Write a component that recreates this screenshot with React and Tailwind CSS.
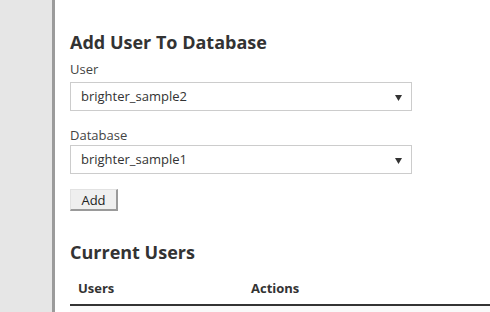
import React from 'react';

const FONT = { fontFamily: '"Open Sans", "Liberation Sans", sans-serif' };

function Select({ value }) {
    return (
        <div className="relative w-[342px] h-[29px] border border-[#cccccc] bg-white flex items-center pl-[10px] text-[13px] text-[#333]">
            <span>{value}</span>
            <svg className="absolute right-[9px] top-[12px]" width="7" height="6" viewBox="0 0 7 6">
                <path d="M0 0 H7 L3.5 6 Z" fill="#333" />
            </svg>
        </div>
    );
}

export default function App() {
    return (
        <div className="flex h-[312px] w-[490px] overflow-hidden bg-white" style={FONT}>
            <div className="w-[55px] shrink-0 bg-[#e6e6e6] border-r-[3px] border-[#9b9b9b]" />
            <div className="pl-[15px] pt-[30px] flex-1 text-[#333]">
                <h1 className="text-[18px] leading-[24px] font-bold text-[#333]">Add User To Database</h1>

                <div className="mt-[6px] text-[13px] leading-[18px] text-[#444]">User</div>
                <div className="mt-[4px]">
                    <Select value="brighter_sample2" />
                </div>

                <div className="mt-[15px] text-[13px] leading-[18px] text-[#444]">Database</div>
                <div className="mt-[1px]">
                    <Select value="brighter_sample1" />
                </div>

                <button className="mt-[15px] w-[48px] h-[22px] bg-[#efefef] border border-[#e2e2e2] border-r-[#9a9a9a] border-b-[#9a9a9a] border-r-2 border-b-2 text-[13px] leading-[18px] text-[#222]">
                    Add
                </button>

                <h2 className="mt-[29px] text-[18px] leading-[24px] font-bold text-[#333]">Current Users</h2>

                <div className="mt-[15px] w-[440px]">
                    <div className="flex border-b-2 border-[#333] pb-[7px] text-[13px] leading-[18px] font-bold text-[#333]">
                        <div className="w-[181px] pl-[8px]">Users</div>
                        <div>Actions</div>
                    </div>
                    <div className="h-[20px] bg-[#f9f9f9]" />
                </div>
            </div>
        </div>
    );
}
